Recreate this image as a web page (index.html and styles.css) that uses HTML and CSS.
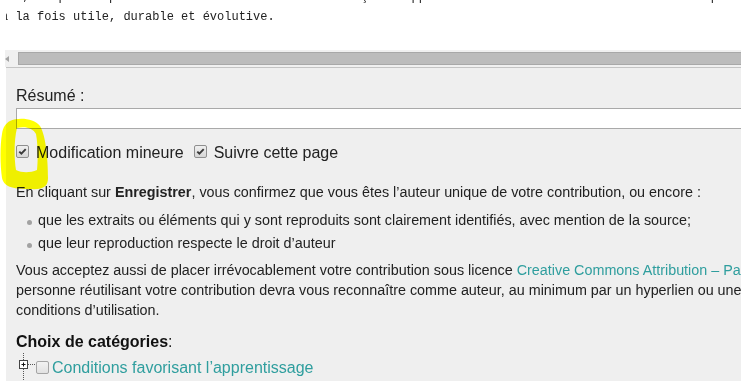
FILE: index.html
```html
<!DOCTYPE html>
<html lang="fr">
<head>
<meta charset="utf-8">
<title>Modifier</title>
<link rel="stylesheet" href="styles.css">
</head>
<body>
<div class="editor">
  <div class="textarea">
    <pre class="code">ité, la participation à wiki-TICE constitue une façon d'apprendre tout en contribuant à une œuvre qui soit
à la fois utile, durable et évolutive.</pre>
  </div>
  <div class="hscroll"><span class="arrow"></span><span class="thumb"></span></div>
</div>
<div class="options">
  <div class="summary-label">Résumé :</div>
  <div class="summary-input"></div>
  <div class="checks">
    <span class="cb checked"><svg viewBox="0 0 11 11" width="11" height="11"><path d="M2.3 5.6 L4.4 7.7 L8.7 3.2" fill="none" stroke="#3a3a3a" stroke-width="1.9"/></svg></span>
    <span class="check-label">Modification mineure</span>
    <span class="cb checked second"><svg viewBox="0 0 11 11" width="11" height="11"><path d="M2.3 5.6 L4.4 7.7 L8.7 3.2" fill="none" stroke="#3a3a3a" stroke-width="1.9"/></svg></span>
    <span class="check-label">Suivre cette page</span>
  </div>
  <p class="notice">En cliquant sur <b>Enregistrer</b>, vous confirmez que vous êtes l’auteur unique de votre contribution, ou encore :</p>
  <ul class="notice-list">
    <li>que les extraits ou éléments qui y sont reproduits sont clairement identifiés, avec mention de la source;</li>
    <li>que leur reproduction respecte le droit d’auteur</li>
  </ul>
  <p class="license">Vous acceptez aussi de placer irrévocablement votre contribution sous licence <a href="#">Creative Commons Attribution – Partage dans les Mêmes Conditions 3.0</a>. Toute<br>personne réutilisant votre contribution devra vous reconnaître comme auteur, au minimum par un hyperlien ou une URL, et respecter les mêmes<br>conditions d’utilisation.</p>
  <div class="cat-title"><b>Choix de catégories</b>:</div>
  <div class="tree-row">
    <svg class="expander" width="17" height="28" viewBox="0 0 17 28">
      <path d="M5.5 0 V7 M5.5 16 V28" stroke="#555" stroke-width="1" stroke-dasharray="1 1" fill="none"/>
      <path d="M10 11.5 H17" stroke="#555" stroke-width="1" stroke-dasharray="1 1" fill="none"/>
      <rect x="1.5" y="7.5" width="8" height="8" fill="#fff" stroke="#444"/>
      <path d="M3.5 11.5 H7.5 M5.5 9.5 V13.5" stroke="#111" stroke-width="1"/>
    </svg>
    <span class="cb unchecked"></span>
    <a href="#" class="cat-link">Conditions favorisant l’apprentissage</a>
  </div>
</div>
<svg class="highlight" width="60" height="200" viewBox="0 0 60 200">
  <path fill-rule="evenodd" fill="#ffff00" d="M10 121 C18 117 34 118 40 126 C46 136 48 160 48 178 C48 186 44 190 30 189 C16 189 4 188 2 178 C0 165 0 145 2 134 C3 127 6 123 10 121 Z M17 128 C25 126 33 128 36 134 C38 145 38 160 37 170 C30 173 22 173 16 170 C14 158 14 140 17 128 Z"/>
</svg>
</body>
</html>
```
FILE: styles.css
```css
html, body {
  margin: 0;
  padding: 0;
  background: #ffffff;
  overflow: hidden;
}
body {
  width: 741px;
  height: 381px;
  position: relative;
  font-family: "Liberation Sans", Arial, sans-serif;
  color: #222222;
}
.editor {
  margin-left: 5px;
}
.textarea {
  height: 50px;
  margin-left: 1px;
  overflow: hidden;
}
.code {
  margin: -13px 0 0 -5px;
  font-family: "Liberation Mono", "Courier New", monospace;
  font-size: 12px;
  line-height: 20px;
  color: #222222;
  white-space: pre;
}
.hscroll {
  height: 17px;
  background: #f0f0f0;
  display: flex;
  align-items: flex-start;
  box-sizing: border-box;
}
.arrow {
  width: 0;
  height: 0;
  margin-top: 6px;
  margin-left: 0px;
  border-top: 3.5px solid transparent;
  border-bottom: 3.5px solid transparent;
  border-right: 4px solid #a3a3a3;
}
.thumb {
  margin-left: 9px;
  margin-top: 2px;
  height: 13px;
  width: 1000px;
  box-sizing: border-box;
  background: #bcbcbc;
  border: 1px solid #a8a8a8;
  border-right: none;
}
.options {
  margin-left: 6px;
  width: 1100px;
  height: 330px;
  box-sizing: border-box;
  border-top: 1px solid #c4c4c4;
  background: #efefef;
  padding: 18px 0 0 10px;
}
.summary-label {
  font-size: 16px;
  line-height: 20px;
}
.summary-input {
  margin-top: 2px;
  height: 21px;
  width: 1000px;
  box-sizing: border-box;
  background: #ffffff;
  border: 1px solid #a9a9a9;
}
.checks {
  margin-top: 14px;
  display: flex;
  align-items: flex-start;
  font-size: 16px;
  line-height: 20px;
}
.cb {
  width: 13px;
  height: 13px;
  box-sizing: border-box;
  border: 1px solid #8f8f8f;
  border-radius: 2px;
  background: linear-gradient(#f0f0f0, #d6d6d6);
  display: flex;
  align-items: center;
  justify-content: center;
  flex: none;
}
.checks .cb {
  margin-top: 2px;
  margin-right: 7px;
}
.checks .cb.second {
  margin-left: 10px;
}
.cb.unchecked {
  border-color: #a5a5a5;
  background: linear-gradient(#f2f2f2, #e2e2e2);
  margin-top: 3px;
  margin-left: 1px;
  margin-right: 3px;
}
.notice {
  margin: 19px 0 0 0;
  font-size: 14.35px;
  line-height: 20px;
  white-space: nowrap;
}
.notice b {
  font-weight: bold;
}
.notice-list {
  list-style: none;
  margin: 8px 0 0 0;
  padding: 0;
  font-size: 14.35px;
  line-height: 20px;
}
.notice-list li {
  display: flex;
  white-space: nowrap;
}
.notice-list li + li {
  margin-top: 3px;
}
.notice-list li::before {
  content: "";
  width: 5px;
  height: 5px;
  border-radius: 50%;
  background: #a2a2a2;
  margin: 10px 6px 0 11px;
  flex: none;
}
.license {
  margin: 7px 0 0 0;
  font-size: 14.35px;
  line-height: 20px;
  white-space: nowrap;
}
.license a, .cat-link {
  color: #2f9e9e;
  text-decoration: none;
}
.cat-title {
  margin-top: 12px;
  font-size: 16px;
  line-height: 20px;
}
.cat-title b {
  font-weight: bold;
  color: #111111;
}
.tree-row {
  margin-top: 6px;
  display: flex;
  align-items: flex-start;
  font-size: 16px;
  line-height: 20px;
  margin-left: 2px;
}
.expander {
  margin-top: -5px;
  flex: none;
}
.highlight {
  position: absolute;
  left: 0;
  top: 0;
  pointer-events: none;
  mix-blend-mode: multiply;
}
```
